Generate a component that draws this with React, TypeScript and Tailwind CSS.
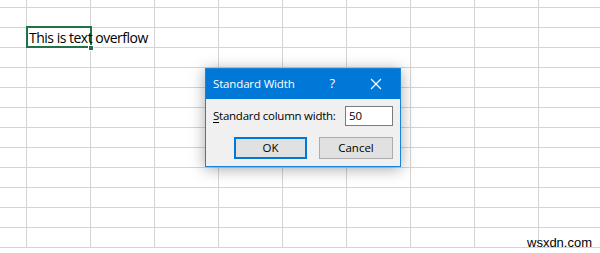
import React from "react";

const colWidths = [27, 64, 64, 64, 64, 64, 64, 64, 64, 64];
const rowHeights = [8, 20, 20, 20, 20, 20, 20, 20, 20, 20, 20, 20, 20];

function Sheet() {
  return (
    <div className="flex flex-col">
      {rowHeights.map((h, r) => (
        <div key={r} className="flex" style={{ height: h }}>
          {colWidths.map((w, c) => (
            <div
              key={c}
              className="relative shrink-0 border-r border-b border-[#d4d4d4]"
              style={{ width: w }}
            >
              {r === 2 && c === 1 && (
                <span className="absolute left-[2px] top-[0px] z-10 whitespace-nowrap font-['Open_Sans',sans-serif] text-[14px] leading-[20px] tracking-[-0.5px] text-black">
                  This is text overflow
                </span>
              )}
            </div>
          ))}
        </div>
      ))}
    </div>
  );
}

export default function App() {
  return (
    <div className="relative h-[253px] w-[600px] overflow-hidden bg-white">
      <Sheet />

      {/* active cell */}
      <div className="absolute left-[26px] top-[26px] h-[22px] w-[66px] border-2 border-[#217346]" />
      <div className="absolute left-[88px] top-[45px] h-[6px] w-[6px] border border-white bg-[#217346]" />

      {/* dialog */}
      <div className="absolute left-[205px] top-[68px] flex h-[99px] w-[196px] flex-col border border-[#1883d7] bg-[#f0f0f0] font-['Open_Sans',sans-serif] shadow-[0_2px_14px_rgba(0,0,0,0.35)]">
        <div className="flex h-[30px] items-center bg-[#0078d7] pl-[7px] text-white">
          <span className="whitespace-nowrap text-[11.5px] tracking-[-0.15px]">Standard Width</span>
          <span className="ml-[35px] text-[13px]">?</span>
          <svg className="ml-[35px]" width="12" height="12" viewBox="0 0 12 12">
            <path d="M1 1L11 11M11 1L1 11" stroke="white" strokeWidth="1.2" fill="none" />
          </svg>
        </div>
        <div className="flex items-center pl-[7px] pt-[7px]">
          <span className="whitespace-nowrap text-[11.5px] tracking-[-0.25px] text-black">
            <span className="underline underline-offset-2">S</span>tandard column width:
          </span>
          <div className="ml-auto mr-[7px] flex h-[20px] w-[48px] shrink-0 items-center border border-[#7a7a7a] bg-white pl-[3px] text-[11.5px] text-black">
            50
          </div>
        </div>
        <div className="flex gap-[12px] pl-[28px] pt-[11px]">
          <button className="h-[22px] w-[73px] border-2 border-[#0078d7] bg-[#e1e1e1] text-[11.5px] text-black">
            OK
          </button>
          <button className="h-[22px] w-[74px] border border-[#adadad] bg-[#e1e1e1] text-[11.5px] text-black">
            Cancel
          </button>
        </div>
      </div>

      <span className="absolute left-[527px] top-[233px] font-['Liberation_Sans',sans-serif] text-[13px] text-black">
        wsxdn.com
      </span>
    </div>
  );
}
